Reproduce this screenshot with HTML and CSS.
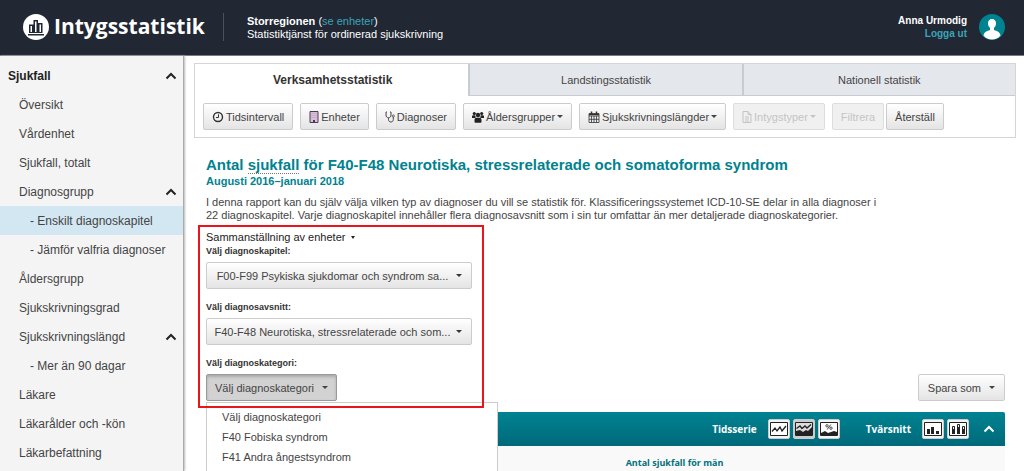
FILE: index.html
```html
<!DOCTYPE html>
<html lang="sv">
<head>
  <meta charset="UTF-8">
  <meta name="viewport" content="width=device-width, initial-scale=1.0">
  <title>Intygsstatistik</title>
  <link rel="stylesheet" href="styles.css">
</head>
<body>

  <header class="header">
    <div class="logo">
      <svg class="logo-icon" viewBox="0 0 26 26" aria-hidden="true">
        <circle cx="13" cy="13" r="13" fill="#fff"/>
        <path d="M6 10.500h4.500V6H15v3h4.500v10H6z" fill="#212733"/>
        <path d="M7.500 12h1.500v6H7.500zM12 7.500h1.500V18H12zM16.500 10.500H18V18h-1.500z" fill="#fff"/>
        <path d="M5 20h16v1.500H5z" fill="#212733"/>
      </svg>
      <span>Intygsstatistik</span>
    </div>
    <div class="header-info">
      <div><strong>Storregionen</strong> (<a href="#">se enheter</a>)</div>
      <div>Statistiktjänst för ordinerad sjukskrivning</div>
    </div>
    <div class="user">
      <strong>Anna Urmodig</strong>
      <a href="#">Logga ut</a>
    </div>
    <svg class="avatar" viewBox="0 0 26 26" aria-hidden="true">
      <circle cx="13" cy="13" r="13" fill="#008391"/>
      <path d="M13 5c-2.600 0-4 1.800-4 4.300 0 2 .8 3.600 2 4.500v2.200c-3 1-6 2-6.500 5.500 2 2.600 5 4 8.500 4s6.500-1.400 8.500-4c-.5-3.500-3.500-4.500-6.500-5.500v-2.200c1.200-.9 2-2.500 2-4.500C17 6.800 15.600 5 13 5z" fill="#fff"/>
    </svg>
  </header>

  <div class="page">
    <nav class="sidebar">
      <ul class="menu">
        <li><a class="menu-title" href="#">Sjukfall <svg class="chevron" viewBox="0 0 12 8"><path d="M1.500 6.500 6 2l4.500 4.500"/></svg></a></li>
        <li><a href="#">Översikt</a></li>
        <li><a href="#">Vårdenhet</a></li>
        <li><a href="#">Sjukfall, totalt</a></li>
        <li><a href="#">Diagnosgrupp <svg class="chevron" viewBox="0 0 12 8"><path d="M1.500 6.500 6 2l4.500 4.500"/></svg></a></li>
        <li><a class="menu-sub active" href="#">- Enskilt diagnoskapitel</a></li>
        <li><a class="menu-sub" href="#">- Jämför valfria diagnoser</a></li>
        <li><a href="#">Åldersgrupp</a></li>
        <li><a href="#">Sjukskrivningsgrad</a></li>
        <li><a href="#">Sjukskrivningslängd <svg class="chevron" viewBox="0 0 12 8"><path d="M1.500 6.500 6 2l4.500 4.500"/></svg></a></li>
        <li><a class="menu-sub" href="#">- Mer än 90 dagar</a></li>
        <li><a href="#">Läkare</a></li>
        <li><a href="#">Läkarålder och -kön</a></li>
        <li><a href="#">Läkarbefattning</a></li>
      </ul>
    </nav>

    <main class="main">
      <section class="filter-box">
        <div class="tabs">
          <a class="tab tab-active" href="#">Verksamhetsstatistik</a>
          <a class="tab" href="#">Landstingsstatistik</a>
          <a class="tab" href="#">Nationell statistik</a>
        </div>
        <div class="toolbar">
          <button class="btn" type="button">
            <svg class="icon" viewBox="0 0 12 12"><circle cx="6" cy="6" r="4.500" fill="none" stroke="#333" stroke-width="1.400"/><path d="M6.500 3.300v3.200H4" fill="none" stroke="#333"/></svg>
            Tidsintervall
          </button>
          <button class="btn" type="button">
            <svg class="icon icon-narrow" viewBox="0 0 10 12"><path d="M1 .5h8v11H1z" fill="#d9bfdc" stroke="#4d3a55"/><path d="M3 2v6M5 2v6M7 2v6" stroke="#b79dbd" stroke-dasharray="1 1"/><path d="M4 9h2v3H4z" fill="#4d3a55"/></svg>
            Enheter
          </button>
          <button class="btn" type="button">
            <svg class="icon icon-narrow" viewBox="0 0 10 12"><path d="M2 1H1v3c0 1.700 1 2.700 2.500 2.700S6 5.700 6 4V1H5M3.500 7v1.500c0 1.500 1 2.500 2.400 2.500s2.400-1 2.400-2.500V6" fill="none" stroke="#444"/><circle cx="8.300" cy="5" r="1.100" fill="none" stroke="#444" stroke-width=".8"/></svg>
            Diagnoser
          </button>
          <button class="btn" type="button" aria-haspopup="true">
            <svg class="icon" viewBox="0 0 12 12" fill="#222"><circle cx="2.300" cy="2.500" r="1.600"/><circle cx="9.700" cy="2.500" r="1.600"/><circle cx="6" cy="4" r="2.200"/><path d="M0 7V5.500C0 4.700.7 4.300 1.500 4.300h1.700C3.300 5.300 3.600 6 4 6.500L2.600 7zM12 7V5.500c0-.8-.7-1.200-1.500-1.200H8.800C8.700 5.300 8.400 6 8 6.500L9.400 7zM2.500 11V9c0-1.400.8-2.300 2-2.300h3c1.200 0 2 .9 2 2.300v2c0 .5-.4.800-1 .8h-5c-.6 0-1-.3-1-.8z"/></svg>
            Åldersgrupper
            <span class="caret"></span>
          </button>
          <button class="btn" type="button" aria-haspopup="true">
            <svg class="icon" viewBox="0 0 12 12" fill="none" stroke="#333"><path d="M1 2.500h10v9H1zM1 5h10M1 8.300h10M3.500 5v6.500M6 5v6.500M8.500 5v6.500" stroke-width=".8"/><path d="M1 3.500h10M3.500.5v2.500M8.500.5v2.500" stroke-width="1.500"/></svg>
            Sjukskrivningslängder
            <span class="caret"></span>
          </button>
          <button class="btn" type="button" aria-haspopup="true" disabled>
            <svg class="icon icon-narrow" viewBox="0 0 10 12" fill="none" stroke="#c4c4c4"><path d="M1 .5h5l3 3v8H1zM6 .5v3h3M3 6h4M3 8h4M3 10h4"/></svg>
            Intygstyper
            <span class="caret"></span>
          </button>
          <div class="btn-pair">
            <button class="btn" type="button" disabled>Filtrera</button>
            <button class="btn" type="button">Återställ</button>
          </div>
        </div>
      </section>

      <section class="report">
        <h1>Antal <span class="term">sjukfall</span> för F40-F48 Neurotiska, stressrelaterade och somatoforma syndrom</h1>
        <h2>Augusti 2016–januari 2018</h2>
        <p class="description">I denna rapport kan du själv välja vilken typ av diagnoser du vill se statistik för. Klassificeringssystemet ICD-10-SE delar in alla diagnoser i 22 diagnoskapitel. Varje diagnoskapitel innehåller flera diagnosavsnitt som i sin tur omfattar än mer detaljerade diagnoskategorier.</p>

        <div class="controls">
          <div class="diagnosis">
            <button class="units" type="button">Sammanställning av enheter <span class="caret caret-small"></span></button>

            <label for="chapter">Välj diagnoskapitel:</label>
            <div class="select-wrap">
              <select class="select" id="chapter">
                <option>F00-F99 Psykiska sjukdomar och syndrom sa...</option>
              </select>
            </div>

            <label for="section">Välj diagnosavsnitt:</label>
            <div class="select-wrap">
              <select class="select" id="section">
                <option>F40-F48 Neurotiska, stressrelaterade och som...</option>
              </select>
            </div>

            <label for="category">Välj diagnoskategori:</label>
            <div class="dropdown">
              <button class="btn btn-open" id="category" type="button" aria-haspopup="listbox" aria-expanded="true">Välj diagnoskategori <span class="caret"></span></button>
              <ul class="dropdown-menu" role="listbox">
                <li role="option">Välj diagnoskategori</li>
                <li role="option">F40 Fobiska syndrom</li>
                <li role="option">F41 Andra ångestsyndrom</li>
              </ul>
            </div>
          </div>
          <button class="btn btn-save" type="button" aria-haspopup="true">Spara som <span class="caret"></span></button>
        </div>

        <div class="chart-bar">
          <span class="chart-label">Tidsserie</span>
          <div class="chart-group">
            <button class="chart-btn" type="button" aria-label="Linjediagram">
              <svg viewBox="0 0 18 14"><path d="M.5.5h17v13H.5z" fill="#fff" stroke="#222"/><path d="M2 9.500 5 6l2 3 3-4 2 4 4-5" fill="none" stroke="#222" stroke-width="1.300"/></svg>
            </button>
            <button class="chart-btn chart-btn-active" type="button" aria-label="Ytdiagram">
              <svg viewBox="0 0 18 14"><path d="M.5.5h17v13H.5z" fill="#ddd" stroke="#222"/><path d="M1 13V9l4-1 3 2 3-2 2 1 4-4v8z" fill="#222"/><path d="M1.500 6.500 5 4l2 2.500 3-2.500 2 2 4-3.500" fill="none" stroke="#222" stroke-width="1.300"/></svg>
            </button>
            <button class="chart-btn" type="button" aria-label="Ytdiagram, procent">
              <svg viewBox="0 0 18 14"><path d="M.5.5h17v13H.5z" fill="#fff" stroke="#222"/><path d="M1 13v-2l4-2 3 2 3-1 3-1 3 1v3z" fill="#222"/><g fill="none" stroke="#222" stroke-width=".8"><circle cx="7" cy="3.800" r="1.200"/><circle cx="11" cy="6.200" r="1.200"/><path d="M10.800 2.500 7.200 7.500"/></g></svg>
            </button>
          </div>
          <span class="chart-label">Tvärsnitt</span>
          <div class="chart-group">
            <button class="chart-btn" type="button" aria-label="Stapeldiagram">
              <svg viewBox="0 0 18 14"><path d="M.5.5h17v13H.5z" fill="#fff" stroke="#222"/><path d="M3 7h3v5H3zM7 5h3v7H7zM12 9h3v3h-3z" fill="#222"/></svg>
            </button>
            <button class="chart-btn" type="button" aria-label="Staplat diagram">
              <svg viewBox="0 0 18 14"><path d="M.5.5h17v13H.5z" fill="#fff" stroke="#222"/><path d="M3.500 4.500h2v3h-2zM8.500 2.500h2v3h-2zM13.500 4.500h2v3h-2z" fill="#eee" stroke="#222"/><path d="M3 7h3v5H3zM8 5h3v7H8zM13 7h3v5h-3z" fill="#222"/></svg>
            </button>
          </div>
          <button class="collapse" type="button" aria-label="Dölj diagram"><svg class="chevron" viewBox="0 0 12 8"><path d="M1.500 6.500 6 2l4.500 4.500"/></svg></button>
        </div>
        <div class="chart">
          <h3>Antal sjukfall för män</h3>
        </div>
      </section>
    </main>
  </div>

</body>
</html>
```

FILE: styles.css
```css
* {
  box-sizing: border-box;
}

body {
  display: flex;
  flex-direction: column;
  height: 100vh;
  margin: 0;
  overflow: hidden;
  font-family: "Liberation Sans", Arial, sans-serif;
  font-size: 12px;
  color: #444;
  background-color: #fff;
}

button, select {
  font-family: inherit;
  cursor: pointer;
}

ul {
  list-style: none;
  margin: 0;
  padding: 0;
}

a {
  text-decoration: none;
}

/* Header */
.header {
  display: flex;
  flex: none;
  align-items: center;
  height: 56px;
  padding: 0 19px 2px 23px;
  background-color: #212733;
  border-bottom: 1px solid #777b83;
  color: #fff;
  font-size: 11px;
  line-height: 13px;
}

.header a {
  color: #3aa5b9;
}

.logo {
  display: flex;
  align-items: center;
  gap: 5px;
  height: 28px;
  padding-right: 18px;
  border-right: 1px solid #4b505b;
  font-family: "Open Sans", sans-serif;
  font-size: 21px;
  font-weight: 700;
}

.logo-icon,
.avatar {
  width: 26px;
  height: 26px;
}

.header-info {
  margin-left: 23px;
  padding-top: 2px;
}

.user {
  display: flex;
  flex-direction: column;
  margin-left: auto;
  margin-right: 12px;
  font-size: 10px;
  text-align: right;
}

.user a {
  font-weight: bold;
}

/* Sidebar */
.page {
  display: flex;
  flex: 1;
  min-height: 0;
}

.sidebar {
  flex: none;
  width: 184px;
  padding-top: 5px;
  background-color: #f4f4f4;
  border-right: 1px solid #aaa;
  box-shadow: 1px 0 2px #bbb;
}

.menu a {
  display: flex;
  align-items: center;
  justify-content: space-between;
  height: 29px;
  padding: 0 6px 0 19px;
  color: #444;
  white-space: nowrap;
}

.menu .menu-title {
  padding-left: 8px;
  color: #222;
  font-weight: bold;
}

.menu .menu-sub {
  padding-left: 30px;
}

.menu .active {
  background-color: #d3e7f3;
}

.chevron {
  width: 12px;
  height: 8px;
  fill: none;
  stroke: #222;
  stroke-width: 2;
}

/* Tabs and filters */
.main {
  flex: 1;
  min-width: 0;
  padding: 7px 8px 0 10px;
  overflow: hidden;
}

.filter-box {
  border: 1px solid #d5d5d5;
}

.tabs {
  display: flex;
}

.tab {
  flex: 1;
  height: 32px;
  border-left: 2px solid #c8cbd0;
  border-bottom: 1px solid #c8cbd0;
  background-color: #e4e7ec;
  color: #444;
  font-size: 11px;
  line-height: 32px;
  text-align: center;
}

.tab-active {
  border-color: transparent;
  background-color: #fff;
  color: #333;
  font-size: 12px;
  font-weight: bold;
}

.toolbar {
  display: flex;
  flex-wrap: wrap;
  gap: 7px;
  padding: 7px 8px;
}

.btn-pair {
  display: flex;
  gap: 2px;
}

.btn {
  display: flex;
  align-items: center;
  gap: 2px;
  height: 27px;
  padding: 0 8px;
  border: 1px solid #ccc;
  border-radius: 2px;
  background: linear-gradient(#fff, #e4e4e4);
  color: #444;
  font-size: 11px;
  white-space: nowrap;
}

.btn:disabled {
  border-color: #ddd;
  background: #f0f0f0;
  color: #c4c4c4;
}

.icon {
  width: 12px;
  height: 12px;
}

.icon-narrow {
  width: 10px;
}

.caret {
  display: inline-block;
  border: 3px solid transparent;
  border-top-color: currentColor;
  border-bottom: 0;
}

.caret-small {
  margin-left: 3px;
  border-width: 2px;
  border-top-width: 3px;
  vertical-align: middle;
}

/* Report */
.report {
  padding: 17px 11px 0 12px;
}

h1, h2 {
  margin: 0;
  color: #00828f;
}

h1 {
  font-size: 15px;
  line-height: 20px;
}

h2 {
  font-size: 11px;
  line-height: 13px;
}

.term {
  border-bottom: 1px dotted #777;
}

.description {
  max-width: 680px;
  margin: 8px 0 3px;
  font-size: 11px;
  line-height: 13px;
}

.controls {
  display: flex;
  align-items: flex-end;
  justify-content: space-between;
  margin: 0 0 4px -8px;
}

.diagnosis {
  position: relative;
  width: 286px;
  padding: 4px 12px 7px 8px;
}

/* Red frame lies over the open menu */
.diagnosis::after {
  content: "";
  position: absolute;
  inset: 0;
  z-index: 2;
  border: 2px solid #e8151b;
  pointer-events: none;
}

.units {
  display: block;
  height: 15px;
  padding: 0;
  border: 0;
  background: none;
  color: #222;
  font-size: 11px;
}

.diagnosis label {
  display: block;
  margin-bottom: 4px;
  color: #333;
  font-size: 9px;
  font-weight: bold;
  line-height: 14px;
}

.select-wrap {
  position: relative;
  margin-bottom: 11px;
  color: #333;
}

.select-wrap::after {
  content: "";
  position: absolute;
  top: 12px;
  right: 10px;
  border: 3px solid transparent;
  border-top-color: currentColor;
  border-bottom: 0;
  pointer-events: none;
}

.select {
  appearance: none;
  display: block;
  width: 100%;
  height: 27px;
  padding: 0 20px 0 7px;
  border: 1px solid #ccc;
  border-radius: 2px;
  background: linear-gradient(#fff, #e4e4e4);
  color: #444;
  font-size: 11px;
  text-align: center;
}

.dropdown {
  position: relative;
}

.dropdown .btn,
.btn-save {
  gap: 8px;
}

.btn-open {
  border-color: #999;
  background: #d2d2d2;
  box-shadow: inset 0 2px 3px #aaa;
}

.dropdown-menu {
  position: absolute;
  top: 28px;
  left: 0;
  z-index: 1;
  width: 292px;
  min-height: 120px;
  padding: 4px 15px;
  border: 1px solid #ccc;
  background-color: #fff;
  font-size: 11px;
  line-height: 20px;
}

.btn-save {
  margin-bottom: 7px;
  padding: 0 9px;
}

.chart-bar {
  display: flex;
  align-items: center;
  justify-content: flex-end;
  height: 34px;
  padding-right: 10px;
  border-radius: 2px 2px 0 0;
  background: linear-gradient(#008391, #00697a);
}

.chart-label,
.chart h3 {
  font-family: "Open Sans", sans-serif;
  font-size: 10px;
  font-weight: 700;
}

.chart-label {
  margin-right: 11px;
  color: #fff;
}

.chart-group {
  display: flex;
  gap: 3px;
  margin-right: 26px;
}

.chart-group:last-of-type {
  margin-right: 14px;
}

.chart-btn {
  display: flex;
  align-items: center;
  justify-content: center;
  width: 22px;
  height: 20px;
  padding: 0;
  border: 1px solid #ccc;
  border-radius: 2px;
  background: #f4f4f4;
}

.chart-btn svg {
  width: 18px;
  height: 14px;
}

.chart-btn-active {
  background: #ccc;
}

.collapse {
  display: flex;
  padding: 0;
  border: 0;
  background: none;
}

.collapse .chevron {
  stroke: #fff;
}

.chart {
  min-height: 200px;
  padding: 10px 0 0 138px;
  background-color: #f9f9f9;
}

.chart h3 {
  margin: 0;
  color: #00707c;
  font-size: 9px;
  line-height: 14px;
  text-align: center;
}
```
